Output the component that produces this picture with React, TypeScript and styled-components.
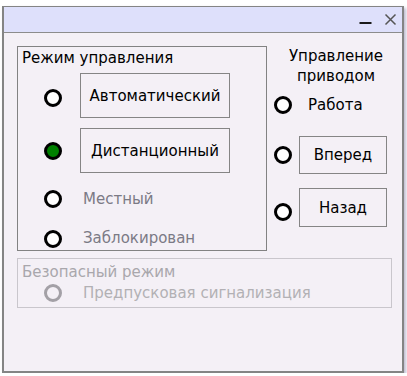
import React from "react";
import styled, { createGlobalStyle } from "styled-components";

const Global = createGlobalStyle`
  html, body { margin: 0; padding: 0; background: #ffffff; }
  body { font-family: "DejaVu Sans", "Liberation Sans", sans-serif; }
`;

const Window = styled.div`
  margin: 6px 0 0 2px;
  width: 402px;
  height: 367px;
  box-sizing: border-box;
  border: 2px solid #848484;
  border-top-width: 1px;
  background: #f4f0f6;
  display: flex;
  flex-direction: column;
  box-shadow: 2px 2px 3px rgba(110, 105, 150, 0.45);
`;

const TitleBar = styled.div`
  height: 25px;
  flex: none;
  background: #dee0fb;
  border-bottom: 1px solid #8c8c8c;
  display: flex;
  align-items: center;
  justify-content: flex-end;
  gap: 12px;
  padding-right: 5px;
`;

const IconBtn = styled.div`
  display: flex;
  width: 13px;
  height: 13px;
  align-items: center;
  justify-content: center;
`;

const Content = styled.div`
  padding: 13px 10px 0 13px;
  display: flex;
  flex-direction: column;
  gap: 7px;
`;

const TopRow = styled.div`
  display: flex;
  gap: 7px;
  align-items: flex-start;
`;

const GroupBox = styled.div<{ $disabled?: boolean; $w: number }>`
  width: ${(p) => p.$w}px;
  box-sizing: border-box;
  border: 1px solid ${(p) => (p.$disabled ? "#c9c6cc" : "#828282")};
  padding: ${(p) => (p.$disabled ? "3px 4px 3px 4px" : "1px 4px 0 4px")};
  display: flex;
  flex-direction: column;
`;

const GroupTitle = styled.div<{ $disabled?: boolean }>`
  font-size: 15px;
  line-height: 20px;
  height: 20px;
  color: ${(p) => (p.$disabled ? "#a9a7ac" : "#000000")};
  white-space: nowrap;
`;

const Row = styled.div<{ $h: number; $mt?: number }>`
  height: ${(p) => p.$h}px;
  margin-top: ${(p) => p.$mt ?? 0}px;
  display: flex;
  align-items: center;
  padding-left: 22px;
`;

const Radio = styled.div<{ $checked?: boolean; $disabled?: boolean; $dy?: number }>`
  width: 18px;
  height: 18px;
  flex: none;
  box-sizing: border-box;
  border-radius: 50%;
  border: 3px solid ${(p) => (p.$disabled ? "#a3a0a6" : "#000000")};
  background: ${(p) => (p.$checked ? "#008000" : p.$disabled ? "transparent" : "#ffffff")};
  transform: translateY(${(p) => p.$dy ?? 0}px);
`;

const Button = styled.div<{ $w: number; $h: number; $ml?: number }>`
  width: ${(p) => p.$w}px;
  height: ${(p) => p.$h}px;
  margin-left: ${(p) => p.$ml ?? 0}px;
  box-sizing: border-box;
  border: 1px solid #858585;
  display: flex;
  align-items: center;
  justify-content: center;
  font-size: 15px;
  color: #000000;
  white-space: nowrap;
`;

const Label = styled.div<{ $tone?: "normal" | "muted" | "disabled"; $ml?: number }>`
  font-size: 15px;
  margin-left: ${(p) => p.$ml ?? 21}px;
  color: ${(p) =>
    p.$tone === "disabled" ? "#b2b0b4" : p.$tone === "muted" ? "#7b7a85" : "#000000"};
  white-space: nowrap;
`;

const RightCol = styled.div`
  width: 118px;
  display: flex;
  flex-direction: column;
`;

const RightTitle = styled.div`
  font-size: 15px;
  line-height: 20px;
  text-align: center;
  color: #000000;
  padding-left: 6px;
`;

const RightRow = styled.div<{ $h: number; $mt?: number }>`
  height: ${(p) => p.$h}px;
  margin-top: ${(p) => p.$mt ?? 0}px;
  display: flex;
  align-items: center;
  gap: 7px;
`;

export default function App() {
  return (
    <>
      <Global />
      <Window>
        <TitleBar>
          <IconBtn>
            <svg width="13" height="13" viewBox="0 0 13 13">
              <rect x="0.5" y="9" width="12" height="2" fill="#1a1a1a" />
            </svg>
          </IconBtn>
          <IconBtn>
            <svg width="13" height="13" viewBox="0 0 13 13">
              <path d="M1.5 1.5 L11.5 11.5 M11.5 1.5 L1.5 11.5" stroke="#555" strokeWidth="1.5" />
            </svg>
          </IconBtn>
        </TitleBar>
        <Content>
          <TopRow>
            <GroupBox $w={250}>
              <GroupTitle>Режим управления</GroupTitle>
              <Row $h={45} $mt={5}>
                <Radio $dy={2} />
                <Button $w={150} $h={45} $ml={18}>
                  Автоматический
                </Button>
              </Row>
              <Row $h={45} $mt={10}>
                <Radio $checked />
                <Button $w={150} $h={45} $ml={18}>
                  Дистанционный
                </Button>
              </Row>
              <Row $h={52}>
                <Radio />
                <Label $tone="muted">Местный</Label>
              </Row>
              <Row $h={25}>
                <Radio $dy={1} />
                <Label $tone="muted">Заблокирован</Label>
              </Row>
            </GroupBox>
            <RightCol>
              <RightTitle>
                Управление
                <br />
                приводом
              </RightTitle>
              <RightRow $h={37}>
                <Radio />
                <Label $ml={9}>Работа</Label>
              </RightRow>
              <RightRow $h={38} $mt={13}>
                <Radio />
                <Button $w={88} $h={38}>Вперед</Button>
              </RightRow>
              <RightRow $h={39} $mt={14}>
                <Radio $dy={4} />
                <Button $w={88} $h={39}>Назад</Button>
              </RightRow>
            </RightCol>
          </TopRow>
          <GroupBox $w={375} $disabled>
            <GroupTitle $disabled>Безопасный режим</GroupTitle>
            <Row $h={22}>
              <Radio $disabled />
              <Label $tone="disabled">Предпусковая сигнализация</Label>
            </Row>
          </GroupBox>
        </Content>
      </Window>
    </>
  );
}
